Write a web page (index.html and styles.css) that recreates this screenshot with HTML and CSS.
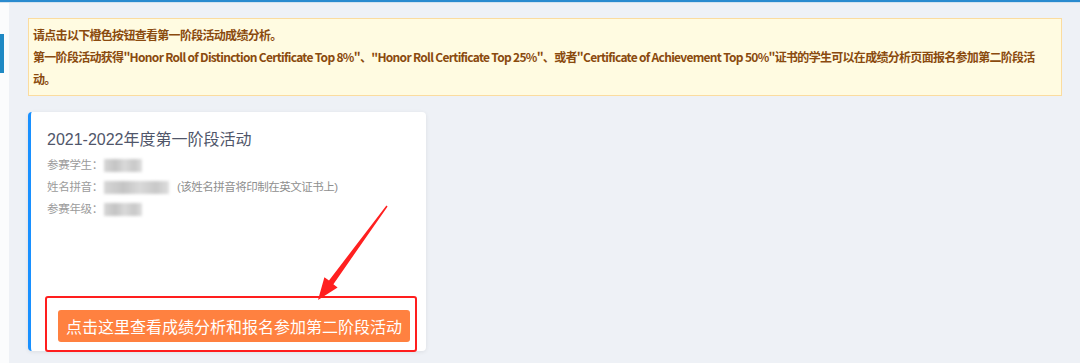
FILE: index.html
```html
<!DOCTYPE html>
<html lang="zh-CN">

<head>
    <meta charset="UTF-8">
    <meta name="viewport" content="width=device-width, initial-scale=1.0">
    <title>成绩分析</title>
    <link rel="stylesheet" href="styles.css">
</head>

<body>
    <div class="topline"></div>
    <div class="layout">
        <div class="sidebar">
            <div class="sidebar-active"></div>
        </div>

        <div class="main">
            <div class="notice">
                <p>请点击以下橙色按钮查看第一阶段活动成绩分析。</p>
                <p>第一阶段活动获得"Honor Roll of Distinction Certificate Top 8%"、"Honor Roll Certificate Top 25%"、或者"Certificate of Achievement Top 50%"证书的学生可以在成绩分析页面报名参加第二阶段活动。</p>
            </div>

            <div class="card">
                <h2 class="card-title">2021-2022年度第一阶段活动</h2>
                <p class="info">参赛学生：<span class="mask mask-short"></span></p>
                <p class="info">姓名拼音：<span class="mask mask-long"></span><span class="hint">(该姓名拼音将印制在英文证书上)</span></p>
                <p class="info">参赛年级：<span class="mask mask-short"></span></p>
                <button class="btn-orange">点击这里查看成绩分析和报名参加第二阶段活动</button>
            </div>
        </div>
    </div>

    <!-- annotation drawn over the screenshot -->
    <svg class="annotation" width="1080" height="363" viewBox="0 0 1080 363">
        <rect x="46" y="297" width="370" height="54" rx="2" fill="none" stroke="#ff1e1e" stroke-width="2" />
        <polygon fill="#ff2020"
            points="387.6,206.4 333.4,284.2 337.6,287.6 318,300 324.4,277.2 329,280.4 386.4,205.6" />
    </svg>
</body>

</html>
```

FILE: styles.css
```css
body {
    margin: 0;
    height: 363px;
    overflow: hidden;
    background-color: #eef1f6;
    font-family: "Liberation Sans", "Noto Sans CJK SC", sans-serif;
    position: relative;
}

p {
    margin: 0;
}

.topline {
    height: 2px;
    background-color: #2a8bcf;
    border-bottom: 1px solid #d3e2ee;
}

.layout {
    display: flex;
    height: 360px;
}

.sidebar {
    width: 9px;
    background-color: #fbfcfd;
    padding-top: 31px;
}

.sidebar-active {
    width: 4px;
    height: 39px;
    background-color: #1f89c4;
}

.main {
    padding: 15px 0 0 19px;
}

.notice {
    width: 1010px;
    padding: 5px 18px 5px 4px;
    background-color: #fffbe1;
    border: 1px solid #fbdc9f;
    color: #8a4a0e;
    font-family: "Noto Sans CJK SC", sans-serif;
    font-size: 12px;
    font-weight: bold;
    letter-spacing: -0.7px;
    line-height: 22px;
}

.card {
    margin-top: 16px;
    width: 379px;
    height: 223px;
    padding: 16px 0 0 16px;
    background-color: #fff;
    border-left: 3px solid #1890ff;
    border-radius: 4px;
    box-shadow: 0 1px 4px rgba(0, 0, 0, 0.08);
    display: flex;
    flex-direction: column;
}

.card-title {
    margin: 0 0 2px;
    font-size: 16px;
    font-weight: normal;
    line-height: 24px;
    color: #50566a;
}

.info {
    font-size: 11.5px;
    letter-spacing: -0.3px;
    line-height: 22px;
    color: #9b9b9b;
    display: flex;
    align-items: center;
}

.mask {
    display: inline-block;
    height: 13px;
    margin-left: 1px;
    background: linear-gradient(90deg, #d6d6d6 0%, #c4c4c4 30%, #d9d9d9 55%, #c8c8c8 80%, #dedede 100%);
    filter: blur(1.5px);
}

.mask-short {
    width: 38px;
}

.mask-long {
    width: 65px;
}

.hint {
    margin-left: 8px;
    letter-spacing: -0.5px;
    color: #8f8f8f;
}

.btn-orange {
    margin: auto 0 9px 11px;
    width: 352px;
    height: 32px;
    padding: 0;
    border: none;
    border-radius: 3px;
    background-color: #ff8140;
    color: #fff;
    font-family: "Liberation Sans", "Noto Sans CJK SC", sans-serif;
    font-size: 16px;
    cursor: pointer;
}

.annotation {
    position: absolute;
    top: 0;
    left: 0;
    pointer-events: none;
}
```
